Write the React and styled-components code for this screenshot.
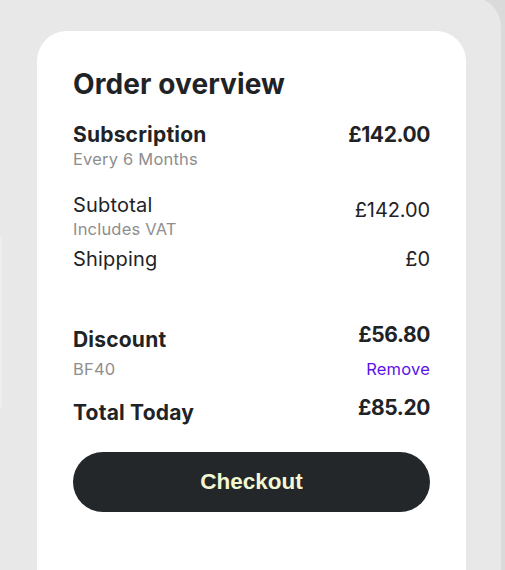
import React from "react";
import styled, { createGlobalStyle } from "styled-components";

const GlobalStyle = createGlobalStyle`
  html, body {
    margin: 0;
    padding: 0;
    background: #dadada;
    overflow: hidden;
  }
  body {
    font-family: Inter, "Noto Sans", sans-serif;
    color: #1f2326;
  }
`;

const Page = styled.div`
  position: relative;
  width: 501px;
  height: 573px;
  margin-top: -3px;
  padding-top: 34px;
  box-sizing: border-box;
  background: #e8e8e8;
  border-top-right-radius: 30px;
`;

// faint edge of something sitting to the left of the view
const EdgeGlow = styled.span`
  position: absolute;
  left: -6px;
  top: 238px;
  width: 8px;
  height: 175px;
  border-radius: 6px;
  background: #eeeeee;
`;

const Card = styled.section`
  margin-left: 37px;
  width: 429px;
  height: 100%;
  box-sizing: border-box;
  padding: 36px 36px 0;
  background: #ffffff;
  border-radius: 30px 30px 0 0;
  display: flex;
  flex-direction: column;
`;

const Title = styled.h2`
  margin: 0 0 21px;
  font-size: 28px;
  line-height: 34px;
  font-weight: 700;
  letter-spacing: 0.1px;
`;

const Row = styled.div`
  display: flex;
  justify-content: space-between;
  align-items: flex-start;
  margin-top: ${(p) => p.$gap || 0}px;
`;

const Stack = styled.div`
  display: flex;
  flex-direction: column;
  align-items: ${(p) => (p.$right ? "flex-end" : "flex-start")};
`;

const Label = styled.span`
  font-size: ${(p) => (p.$strong ? 21 : 20)}px;
  line-height: 26px;
  font-weight: ${(p) => (p.$strong ? 700 : 400)};
  letter-spacing: 0.2px;
  margin-top: ${(p) => p.$shift || 0}px;
`;

const Value = styled(Label)`
  letter-spacing: ${(p) => (p.$strong ? "-0.4px" : "-0.1px")};
`;

const Sub = styled.span`
  font-size: 16.5px;
  line-height: 20px;
  color: #8e8e8e;
  letter-spacing: 0.2px;
  margin-top: ${(p) => p.$gap || 1}px;
`;

const Link = styled.a`
  font-size: 16.5px;
  line-height: 20px;
  color: #5b12e8;
  letter-spacing: 0.2px;
  margin-top: ${(p) => p.$gap || 0}px;
  cursor: pointer;
`;

const CheckoutButton = styled.button`
  margin-top: 26px;
  height: 60px;
  width: 100%;
  border: none;
  border-radius: 30px;
  background: #23272a;
  color: #f4f8d2;
  font-family: "Liberation Sans", Arial, sans-serif;
  font-weight: 700;
  font-size: 22.5px;
  cursor: pointer;
`;

export default function App() {
  return (
    <>
      <GlobalStyle />
      <Page>
        <EdgeGlow />
        <Card>
          <Title>Order overview</Title>

          <Row>
            <Stack>
              <Label $strong>Subscription</Label>
              <Sub>Every 6 Months</Sub>
            </Stack>
            <Value $strong>£142.00</Value>
          </Row>

          <Row $gap={23}>
            <Stack>
              <Label>Subtotal</Label>
              <Sub>Includes VAT</Sub>
            </Stack>
            <Value $shift={5}>£142.00</Value>
          </Row>

          <Row $gap={7}>
            <Label>Shipping</Label>
            <Value>£0</Value>
          </Row>

          <Row $gap={50}>
            <Stack>
              <Label $strong $shift={5}>Discount</Label>
              <Sub $gap={6}>BF40</Sub>
            </Stack>
            <Stack $right>
              <Value $strong>£56.80</Value>
              <Link $gap={11}>Remove</Link>
            </Stack>
          </Row>

          <Row $gap={16}>
            <Label $strong $shift={5}>Total Today</Label>
            <Value $strong>£85.20</Value>
          </Row>

          <CheckoutButton>Checkout</CheckoutButton>
        </Card>
      </Page>
    </>
  );
}
